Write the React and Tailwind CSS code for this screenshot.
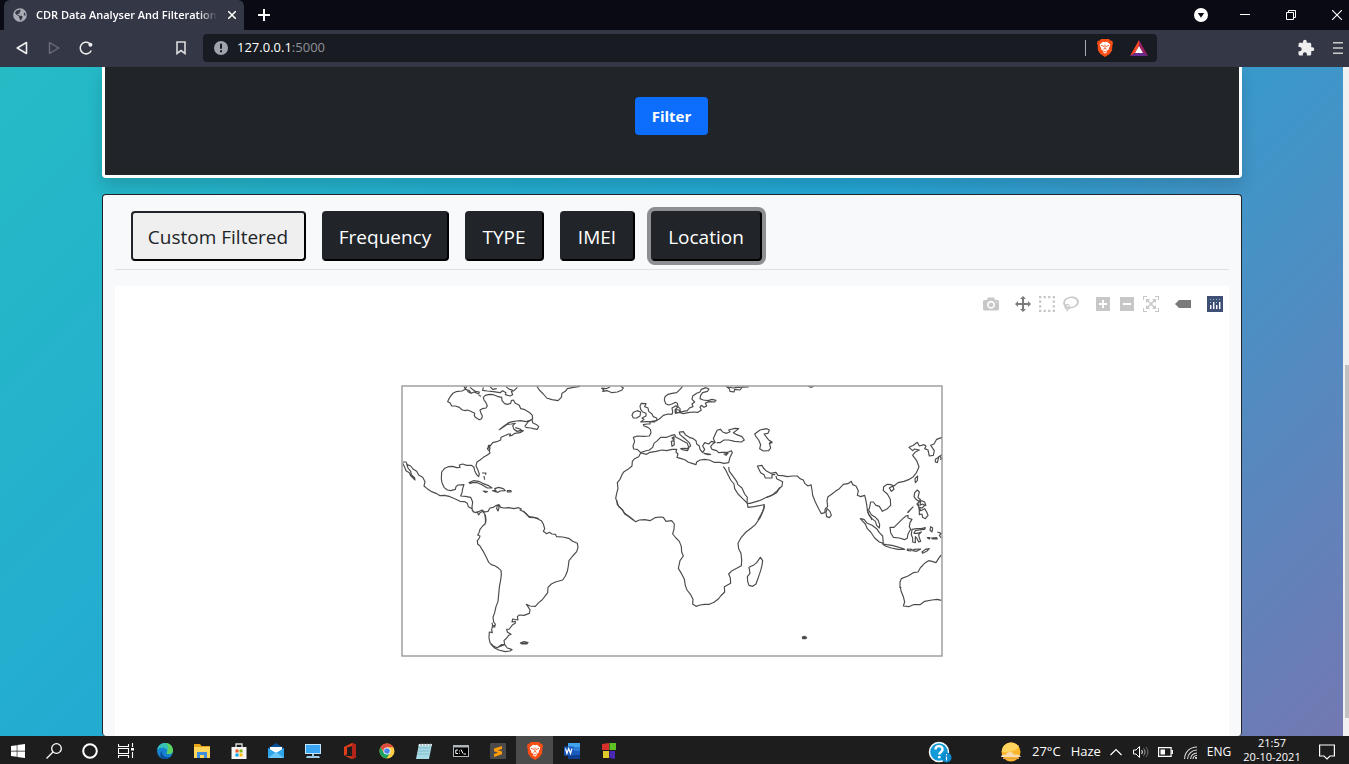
import React from "react";
import { FaWindows, FaGlobeAmericas } from "react-icons/fa";
import { MdExtension } from "react-icons/md";

const MODEBAR = {
  camera: {
    box: "0 0 1000 1000",
    d: "m500 450c-83 0-150-67-150-150 0-83 67-150 150-150 83 0 150 67 150 150 0 83-67 150-150 150z m400 150h-120c-16 0-34 13-39 29l-31 93c-6 15-23 28-40 28h-340c-16 0-34-13-39-28l-31-94c-6-15-23-28-40-28h-120c-55 0-100-45-100-100v-450c0-55 45-100 100-100h800c55 0 100 45 100 100v450c0 55-45 100-100 100z m-400-550c-138 0-250 112-250 250 0 138 112 250 250 250 138 0 250-112 250-250 0-138-112-250-250-250z m365 380c-19 0-35 16-35 35 0 19 16 35 35 35 19 0 35-16 35-35 0-19-16-35-35-35z",
  },
  pan: {
    box: "0 0 1000 1000",
    d: "m1000 350l-187 188 0-125-250 0 0 250 125 0-188 187-187-187 125 0 0-250-250 0 0 125-188-188 186-187 0 125 252 0 0-250-125 0 187-188 188 188-125 0 0 250 250 0 0-126 187 188z",
  },
  select: {
    box: "0 0 1000 1000",
    d: "m0 850l0-143 143 0 0 143-143 0z m286 0l0-143 143 0 0 143-143 0z m285 0l0-143 143 0 0 143-143 0z m286 0l0-143 143 0 0 143-143 0z m-857-286l0-143 143 0 0 143-143 0z m857 0l0-143 143 0 0 143-143 0z m-857-285l0-143 143 0 0 143-143 0z m857 0l0-143 143 0 0 143-143 0z m-857-286l0-143 143 0 0 143-143 0z m286 0l0-143 143 0 0 143-143 0z m285 0l0-143 143 0 0 143-143 0z m286 0l0-143 143 0 0 143-143 0z",
  },
  lasso: {
    box: "0 0 1031 1000",
    d: "m1018 538c-36 207-290 336-568 286-277-48-473-256-436-463 10-57 36-108 76-151-13-66 11-137 68-183 34-28 75-41 114-42l-55-70 0 0c-2-1-3-2-4-3-10-14-8-34 5-45 14-11 34-8 45 4 1 1 2 3 2 5l0 0 113 140c16 11 31 24 45 40 4 3 6 7 8 11 48-3 100 0 151 9 278 48 473 255 436 462z m-624-379c-80 14-149 48-197 96 42 42 109 47 156 9 33-26 47-66 41-105z m-187-74c-19 16-33 37-39 60 50-32 109-55 174-68-42-25-95-24-135 8z m360 75c-34-7-69-9-102-8 8 62-16 128-68 170-73 59-175 54-244-5-9 20-16 40-20 61-28 159 121 317 333 354s407-60 434-217c28-159-121-318-333-355z",
  },
  plus: {
    box: "-62 0 1000 1000",
    d: "m1 787l0-875 875 0 0 875-875 0z m687-500l-187 0 0-187-125 0 0 187-188 0 0 125 188 0 0 187 125 0 0-187 187 0 0-125z",
  },
  minus: {
    box: "-62 0 1000 1000",
    d: "m0 788l0-876 875 0 0 876-875 0z m688-500l-500 0 0 125 500 0 0-125z",
  },
  reset: {
    box: "0 0 1000 1000",
    d: "m250 850l-187 0-63 0 0-62 0-188 63 0 0 188 187 0 0 62z m688 0l-188 0 0-62 188 0 0-188 62 0 0 188 0 62-62 0z m-875-938l0 188-63 0 0-188 0-62 63 0 187 0 0 62-187 0z m875 188l0-188-188 0 0-62 188 0 62 0 0 62 0 188-62 0z m-125 188l-1 0-93-94-156 156 156 156 92-93 2 0 0 250-250 0 0-2 93-92-156-156-156 156 94 92 0 2-250 0 0-250 0 0 93 93 157-156-157-156-93 94 0 0 0-250 250 0 0 0-94 93 156 157 156-157-93-93 0 0 250 0 0 250z",
  },
  tooltip: {
    box: "0 0 1500 1000",
    d: "m375 725l0 0-375-375 375-374 0-1 1125 0 0 750-1125 0z",
  },
};

function ModeButton({ name, label, active }) {
  const icon = MODEBAR[name];
  return (
    <button type="button" aria-label={label} className="size-4">
      <svg viewBox={icon.box} className={active ? "size-4 fill-[#7b7b7b]" : "size-4 fill-[#c7c7c7]"}>
        <path transform="matrix(1 0 0 -1 0 850)" d={icon.d} />
      </svg>
    </button>
  );
}

function Modebar() {
  return (
    <div className="flex justify-end gap-4 pt-[10px] pr-[6px]">
      <ModeButton name="camera" label="Download plot as a png" />
      <div className="flex gap-2">
        <ModeButton name="pan" label="Pan" active />
        <ModeButton name="select" label="Box Select" />
        <ModeButton name="lasso" label="Lasso Select" />
      </div>
      <div className="flex gap-2">
        <ModeButton name="plus" label="Zoom in" />
        <ModeButton name="minus" label="Zoom out" />
        <ModeButton name="reset" label="Reset" />
      </div>
      <ModeButton name="tooltip" label="Toggle show closest data on hover" active />
      <a href="#plotly" aria-label="Produced with Plotly" className="size-4">
        <svg viewBox="0 0 16 16" className="size-4">
          <rect width="16" height="16" fill="#3f4f75" />
          <g fill="#80cfbe">
            <rect x="3" y="3" width="1" height="1" /><rect x="6" y="3" width="1" height="1" />
            <rect x="9" y="3" width="1" height="1" /><rect x="12" y="3" width="1" height="1" />
            <rect x="3" y="6" width="1" height="1" /><rect x="9" y="6" width="1" height="1" />
          </g>
          <g fill="#fff">
            <rect x="3" y="9" width="1.4" height="4" /><rect x="6" y="6" width="1.4" height="7" />
            <rect x="9" y="9" width="1.4" height="4" /><rect x="12" y="6" width="1.4" height="7" />
          </g>
        </svg>
      </a>
    </div>
  );
}

const COASTS = [
  {
    at: "translate(400 380) scale(.33333)",
    d: `M200 19 L196 28 L186 33 L168 35 L160 39 L152 48 L146 58 L143 65 L150 68 L155 78 L166 78 L178 82 L187 90 L196 92 L202 90 L212 94 L224 100 L223 107 L226 112 L238 119 L245 116 L247 108 L243 100 L240 90 L247 86 L258 84 L262 78 L258 68 L252 60 L250 52 L256 46 L268 43 L280 44 L292 49 L305 52 L306 62 L314 71 L322 73 L332 70 L334 62 L340 60 L346 70 L358 76 L362 86 L372 88 L382 94 L390 99 L397 106 L398 116 L388 122 L378 125 L362 122 L350 123 L338 125 L326 128 L312 138 L298 149 L309 142 L322 133 L334 132 L346 130 L338 137 L342 148 L352 154 L360 152 L370 152 L360 158 L345 160 L336 166 L328 168 L332 162 L326 162 L312 168 L303 172 L302 180 L290 185 L278 188 L272 196 L267 196 L264 202 L270 204 L268 213 L270 219 L262 225 L250 232 L240 240 L231 246 L228 257 L234 271 L238 282 L236 290 L230 284 L224 272 L222 262 L214 256 L200 256 L188 252 L178 255 L180 262 L170 263 L158 259 L145 260 L134 265 L125 276 L124 296 L126 308 L132 322 L142 330 L152 332 L166 328 L168 320 L174 315 L192 314 L188 326 L186 338 L182 348 L196 349 L212 352 L218 366 L216 380 L217 392 L226 398 L238 394 L246 390 L254 396 L264 394 L270 384 L280 382 L290 376 L297 374 L302 382 L312 384 L326 383 L342 386 L356 383 L364 387 L360 390 L372 395 L380 404 L388 410 L402 412 L416 416
        M292 376 L290 386 L294 393 L297 384 L295 374
        M8 246 L18 246 L22 254 L32 258 L40 268 L50 274 L56 285 L68 292 L75 305 L72 318 L84 328 L95 335 L108 340 L120 347 L134 346 L150 350 L166 357 L180 364 L194 365 L202 370 L205 380 L216 386 L220 396 L232 397 L236 405 L240 398 L248 394 L254 402 L256 414 L257 430
        M8 250 L14 262 L18 272 L28 278 L32 287 L45 300 L44 294 L34 284 L32 274 L24 264 L20 252
        M264 196 L270 200 L262 206 L266 212
        M374 140 L384 126 L396 118 L398 128 L410 134 L416 140 L412 148 L400 146 L392 144 L376 142
        M342 148 L350 154 L366 152 L360 147 L346 143
        M206 308 L220 302 L236 304 L248 310 L264 316 L276 324 L262 324 L246 314 L232 308 L218 308 L208 311
        M278 332 L288 332 L284 326 L296 322 L310 326 L316 332 L300 333 L294 337 L284 334 Z
        M250 333 L262 335 L256 337 Z M322 332 L333 332 L333 336 L322 336 Z
        M246 279 L258 279 L256 284 M252 288 L254 299
        M192 19 L196 28 L208 32 L214 40 L222 36 L236 42 L238 36 L226 34 L220 30 L210 22 M202 34 L212 40 M236 46 L243 49
        M250 22 L248 31 L262 33 L280 35 L300 38 L308 32 L318 38 L316 44 L330 48 L338 44 L334 34 L342 32 L352 22 M270 20 L278 28 L290 26 M318 20 L328 28 L338 30
        M411 19 L418 30 L430 42 L440 54 L456 59 L474 62 L484 52 L486 40 L496 34 L502 26 L520 22 L540 19`,
  },
  {
    at: "translate(400 500) scale(.33333)",
    d: `M256 44 L258 60 L255 72 L248 78 L240 88 L237 98 L233 105 L240 108 L237 116 L232 122 L233 132 L240 138 L246 148 L252 158 L260 174 L266 187 L274 194 L286 198 L296 205 L303 211 L304 224 L302 240 L298 262 L296 284 L294 304 L288 320 L284 338 L279 352 L281 366 L286 372 L284 381 L277 380 L275 390 L277 398 L268 396 L267 414 L270 428 L280 438 L292 443 L304 434 L314 434 L312 422 L320 414 L326 406 L333 403 L322 396 L320 388 L328 387 L338 374 L346 370 L346 364 L336 366 L338 357 L354 360 L352 350 L358 345 L372 346 L388 340 L390 330 L384 320 L379 313 L390 318 L406 319 L416 308 L426 300 L434 290 L443 278 L444 262 L454 252 L466 246 L488 240 L496 228 L502 214 L505 198 L507 182 L518 168 L530 155 L534 142 L532 130 L518 124 L506 115 L488 111 L470 110 L466 103 L456 102 L448 97 L440 101 L430 94 L434 86 L430 72 L424 62 L406 53 L388 52 L380 42 L368 33
        M272 432 L284 444 L296 450 L316 455 L330 453 L336 449 L322 444 L314 434 L304 438 L294 442
        M276 368 L278 378 L284 376
        M361 429 L372 425 L384 428 L380 432 L366 432 Z M366 430 L380 429`,
  },
  {
    at: "translate(600 380) scale(.33333)",
    d: `M248 19 L240 28 L230 38 L216 40 L204 43 L195 50 L193 60 L197 71 L206 75 L216 72 L226 67 L232 70 L234 80 L240 86 L241 96 L250 94 L262 92 L268 84 L279 80 L276 72 L284 66 L276 58 L278 48 L290 40 L300 36 L304 28 L318 23 L327 27 L322 34 L308 38 L302 46 L300 56 L310 60 L324 62 L336 58 L348 61 L344 66 L328 65 L316 69 L320 78 L312 82 L304 76 L300 82 L304 90 L294 97 L280 96 L264 98 L250 101 L238 97 L226 100 L225 90 L232 82 L228 77 L216 84 L218 96 L216 103 L204 102 L190 106 L178 117 L166 122 L164 126 L150 126 L150 132 L142 132 L130 134 L132 138 L144 142 L151 148 L153 158 L148 168 L130 169 L112 168 L100 172 L104 184 L99 198 L101 207 L112 208 L122 218 L136 213 L148 210 L158 202 L162 190 L172 182 L182 172 L200 172 L212 167 L224 164 L228 172 L240 178 L250 184 L262 190 L266 202 L262 206 L272 198 L268 188 L252 174 L240 164 L238 156 L250 155 L256 164 L268 172 L280 176 L288 182 L290 192 L298 198 L300 208 L308 218 L314 208 L308 198 L314 188 L326 192 L334 184 L346 187 L338 192 L332 200 L336 208 L350 212 L356 218 L366 217 L384 217 L394 212 L397 218 L390 232 L386 248 L372 250 L360 247 L342 247 L328 240 L314 238 L300 240 L290 246 L288 254 L276 250 L264 246 L256 240 L244 236 L231 232 L234 222 L228 216 L230 208 L216 208 L200 212 L186 210 L168 214 L150 217 L140 223 L122 219 L116 230 L104 236 L97 244 L96 258 L84 268 L72 275 L66 284 L60 298 L52 308 L54 325 L50 340 L47 355 L52 368 L56 380 L68 390 L74 402 L84 408 L100 420
        M242 206 L254 205 L266 206 L262 212 L250 210 Z M216 174 L222 170 L222 180 Z M214 184 L222 182 L223 194 L216 199 Z
        M312 220 L332 223 L324 224 Z M372 222 L384 220 L378 226 Z
        M345 186 L340 176 L346 162 L352 150 L362 148 L368 156 L380 160 L390 155 L386 150 L404 145 L416 146 L406 154 L400 158 L410 164 L426 170 L433 180 L424 186 L404 184 L386 180 L372 180 L360 188 L350 188
        M120 78 L124 70 L138 71 L134 80 L144 84 L146 94 L156 102 L160 110 L170 114 L171 122 L154 124 L138 125 L122 126 L132 118 L126 114 L138 108 L138 100 L128 96 L122 88 Z
        M96 106 L100 97 L112 92 L122 96 L120 108 L110 114 L100 114 Z
        M4 24 L12 30 L8 34 L22 32 L36 38 L52 36 L66 30 L70 24 L62 19 M4 24 L18 26 L30 21
        M378 19 L388 26 L390 34 L402 36 L404 28 L420 30 L428 20 M384 21 L400 24 L412 22 L446 21
        M226 88 L236 90 L242 98 L230 98 Z
        M464 162 L480 150 L500 146 L508 150 L504 160 L492 162 L500 172 L506 180 L516 186 L508 190 L512 204 L506 212 L490 213 L479 206 L482 194 L476 180 L468 170 Z
        M370 260 L376 268 L384 284 L392 300 L402 312 L404 326 L414 342 L428 356 L442 370 L444 382 L462 380 L493 374 L492 386 L484 402 L474 420
        M386 261 L388 274 L400 290 L410 304 L414 314 L426 324 L434 342 L442 352 L441 370 L450 370 L478 362 L500 352 L518 344 L532 332 L540 322`,
  },
  {
    at: "translate(600 500) scale(.33333)",
    d: `M50 0 L52 14 L66 28 L74 40 L90 52 L107 65 L118 60 L134 59 L150 62 L165 53 L180 51 L190 52 L198 64 L215 62 L223 72 L222 88 L218 102 L228 114 L238 124 L244 140 L245 156 L250 168 L240 182 L235 205 L244 220 L253 238 L256 256 L261 270 L272 284 L279 298 L278 312 L288 319 L300 315 L314 313 L328 313 L342 307 L354 298 L362 288 L374 276 L373 260 L384 254 L392 250 L391 234 L386 222 L396 212 L410 205 L424 197 L425 180 L423 160 L416 146 L414 130 L424 112 L438 96 L454 84 L466 74 L480 54 L488 36 L493 16
        M481 172 L488 182 L486 196 L482 212 L475 232 L468 252 L458 259 L447 256 L443 244 L442 230 L450 220 L447 202 L460 196 L470 188 Z
        M607 411 L614 409 L620 413 L616 416 L608 416 Z M608 413 L618 414`,
  },
  {
    at: "translate(750 380) scale(.33333)",
    d: `M76 284 L66 284 L66 294 L46 294 L42 284 L32 278 L26 266 L22 258 L36 256 L40 264 L48 272 L62 280 L78 277 L84 286 L98 287 L112 290 L128 288 L142 288 L150 296 L160 300 L164 310 L174 318 L183 314 L186 330 L188 346 L196 366 L206 386 L214 401 L224 398 L226 386 L233 380 L231 362 L234 350 L246 342 L256 334 L268 326 L280 313 L294 311 L304 304 L308 314 L318 318 L325 332 L322 346 L332 350 L344 346 L347 358 L350 374 L352 390 L356 402 L362 412 L366 420 M352 390 L358 386 L362 366 L370 366 L378 376 L388 379 L397 394 L412 386 L422 376 L421 358 L412 342 L400 332 L401 320 L412 313 L424 314 L432 318 L444 308 L462 304 L478 298 L490 290 L500 277 L507 260 L500 242 L488 226 L496 216 L508 210 L494 207 L488 212 L477 202 L490 196 L502 187 L508 198 L522 194 L528 198 L524 206 L534 210 L538 228 L550 226 L553 212 L542 196 L552 192 L560 178 L576 172
        M78 288 L80 296 L98 305 L96 318 L86 328 L80 338 L62 348 L50 352
        M60 184 L66 188 L58 190
        M231 386 L240 394 L244 406 L238 413 L230 410 L228 398 Z
        M418 324 L428 318 L432 328 L424 334 Z M495 296 L503 288 L502 302 L496 308 Z
        M556 238 L566 232 L562 248 L556 246 Z M564 232 L576 224 M570 238 L576 236 L570 230
        M175 19 L182 22 L190 19`,
  },
  {
    at: "translate(820 480) scale(.33333)",
    d: `M142 92 L146 104 L156 116 L166 124 L170 136 L178 144 L179 134 L174 120 L164 110 L154 104 L146 90
        M121 116 L132 118 L142 130 L156 136 L170 146 L178 158 L188 168 L190 190 L178 186 L164 174 L152 156 L142 146 L136 132 Z
        M188 192 L200 194 L216 196 L230 200 L244 204 L254 208 L234 208 L214 204 L196 198 Z
        M210 142 L222 142 L234 130 L246 118 L258 108 L264 106 L264 114 L276 118 L270 128 L268 140 L272 148 L264 162 L262 174 L254 179 L238 174 L220 172 L212 158 Z
        M276 148 L290 146 L304 146 L316 143 L314 148 L298 150 L286 152 L282 160 L292 160 L304 156 L296 164 L298 174 L302 184 L296 186 L290 174 L286 170 L286 188 L278 186 L278 174 L274 164 Z
        M332 140 L338 144 L336 156 L330 150 Z M322 173 L330 173 L328 177 Z M335 174 L350 173 L352 177 L338 177 Z
        M352 156 L364 160 L358 166 L364 174 M262 207 L276 208 L272 213 L262 211 Z M282 208 L302 207 L290 214 L278 212 Z M306 216 L316 208 L328 206 L320 214 L308 220 Z
        M284 38 L292 30 L298 36 L294 52 L302 60 L296 64 L288 58 L282 50 Z M262 98 L270 90 L280 80 M264 98 L272 88 M294 68 L302 64 L300 76 L308 72 L314 76 L306 84 L298 82 L302 92 L314 86 L320 96 L324 106 L316 116 L308 112 L306 102 L298 104 L298 92 Z M304 62 L314 66 L318 78 M290 70 L296 80
        M364 225 L358 232 L348 248 L336 244 L326 242 L316 248 L302 262 L294 276 L280 278 L264 288 L244 296 L240 306 L240 318 L243 332 L250 350 L254 366 L250 378 L266 380 L280 374 L300 374 L314 364 L336 360 L352 358 L364 361
        M302 262 L308 258 M238 322 L244 322`,
  },
];

function WorldMap() {
  return (
    <svg viewBox="0 0 542 272" role="img" aria-label="World map" className="mx-auto mt-[73px] block w-[542px] max-w-full">
      <g transform="translate(-401 -385)">
        <g fill="none" stroke="#4c4c4c" strokeWidth="3.5" strokeLinejoin="round">
          {COASTS.map((c) => (
            <path key={c.at} transform={c.at} d={c.d} />
          ))}
        </g>
        <rect x="402" y="386" width="540" height="270" fill="none" stroke="#999" strokeWidth="1.4" />
      </g>
    </svg>
  );
}

function BraveIcon() {
  return (
    <svg viewBox="0 0 16 18" className="h-[18px] w-4">
      <path d="M4 0h8l1.600 1.800 1.600-.1.800 2.800-.6 1.600L15 11.500 12.600 15 8 18 3.400 15 1 11.500.600 6.100 0 4.500.800 1.700l1.600.1z" fill="#fb4e14" />
      <path d="M8 3.200l2-.5 3.300 2.800-.6 2.300-1 1.200.3 1.200-2.400 1.700.3 1.300L8 14.800l-1.900-1.600.3-1.300L4 10.200l.3-1.200-1-1.200-.6-2.300L6 2.700z" fill="#fff" />
      <path d="M4 6.300l3 1.200M12 6.300L9 7.500M6.300 10.400 8 9.500l1.700.9M6.700 12.300l1.300.7 1.300-.7M8 5.500v4" stroke="#fb4e14" strokeWidth=".9" fill="none" />
    </svg>
  );
}

function BrowserChrome() {
  return (
    <header className="shrink-0">
      <div className="flex h-[30px] items-center bg-[#0a0a14] pl-1 text-white">
        <div className="flex h-full w-60 items-center rounded-t-md bg-[#343746] pr-1 pl-[9px]">
          <FaGlobeAmericas className="size-[14px] shrink-0 text-[#a9acb4]" />
          <span className="ml-[9px] shrink-0 mask-r-from-90% text-[11px] font-semibold whitespace-nowrap">
            CDR Data Analyser And Filteration
          </span>
          <button type="button" aria-label="Close tab" className="ml-auto flex size-4 shrink-0 items-center justify-center">
            <svg viewBox="0 0 8 8" className="size-2" stroke="#fff" strokeWidth="1.5"><path d="M0 0l8 8M8 0L0 8" /></svg>
          </button>
        </div>
        <button type="button" aria-label="New tab" className="ml-3 flex size-4 items-center justify-center">
          <svg viewBox="0 0 12 12" className="size-3" stroke="#fff" strokeWidth="2"><path d="M6 0v12M0 6h12" /></svg>
        </button>
        <div className="ml-auto flex h-full items-center">
          <button type="button" aria-label="Search tabs" className="mr-[25px] flex w-[18px] justify-center">
            <svg viewBox="0 0 14 14" className="size-[14px]"><circle cx="7" cy="7" r="7" fill="#fff" /><path d="M3.800 5h6.400L7 9.800z" fill="#0a0a14" /></svg>
          </button>
          <button type="button" aria-label="Minimize" className="flex w-[46px] justify-start pl-[5px]">
            <svg viewBox="0 0 10 10" className="size-[10px]" fill="#fff"><path d="M0 4h10v1H0z" /></svg>
          </button>
          <button type="button" aria-label="Restore" className="flex w-[46px] justify-start pl-[5px]">
            <svg viewBox="0 0 10 10" className="size-[10px]" fill="none" stroke="#fff"><path d="M.5 2.500h7v7h-7zM2.500 2V.5h7v7H8" /></svg>
          </button>
          <button type="button" aria-label="Close" className="flex w-[22px] justify-start pl-[5px]">
            <svg viewBox="0 0 10 10" className="size-[10px]" stroke="#fff" strokeWidth="1.100"><path d="M0 0l10 10M10 0L0 10" /></svg>
          </button>
        </div>
      </div>
      <div className="flex h-[37px] items-center bg-[#343746] pr-[6px] pb-px pl-4">
        <button type="button" aria-label="Back" className="w-8">
          <svg viewBox="0 0 12 14" className="h-[14px] w-3" fill="none" stroke="#eee" strokeWidth="1.600" strokeLinejoin="round"><path d="M10.500 1.500v11L1.200 7z" /></svg>
        </button>
        <button type="button" aria-label="Forward" className="w-[30px]">
          <svg viewBox="0 0 12 14" className="h-[14px] w-3" fill="none" stroke="#6c6e7a" strokeWidth="1.400" strokeLinejoin="round"><path d="M1.500 1.500v11L10.800 7z" /></svg>
        </button>
        <button type="button" aria-label="Reload" className="w-4">
          <svg viewBox="0 0 16 16" className="size-4"><path d="M13.300 10.500A5.800 5.800 0 1 1 11.500 3.400" fill="none" stroke="#eee" strokeWidth="1.500" /><circle cx="12.400" cy="4.800" r="2" fill="#eee" /></svg>
        </button>
        <button type="button" aria-label="Bookmark" className="ml-[81px] w-3">
          <svg viewBox="0 0 12 14" className="h-[14px] w-3" fill="none" stroke="#ddd" strokeWidth="1.600"><path d="M2 1h8v11.500L6 9.500l-4 3z" /></svg>
        </button>
        <div className="ml-4 flex h-7 flex-1 items-center rounded bg-[#191b22] pr-[9px] pl-[11px]">
          <svg viewBox="0 0 14 14" className="size-[14px]"><circle cx="7" cy="7" r="7" fill="#a0a3ab" /><path d="M6 2.800h2v5H6zM6 9.300h2v2H6z" fill="#191b22" /></svg>
          <a href="#address" className="ml-[9px] text-[13px] text-white">
            127.0.0.1<span className="text-[#8f9299]">:5000</span>
          </a>
          <span className="mr-[11px] ml-auto h-4 w-px bg-[#a9abb3]" />
          <button type="button" aria-label="Brave Shields" className="w-4"><BraveIcon /></button>
          <button type="button" aria-label="Brave Rewards" className="ml-[17px] w-[18px]">
            <svg viewBox="0 0 18 16" className="h-4 w-[18px]">
              <path d="M9 0L0 16l5-3 4-7z" fill="#ff4724" /><path d="M9 0l9 16-5-3-4-7z" fill="#9e1f63" /><path d="M0 16h18l-5-3H5z" fill="#662d91" /><path d="M9 6l4 7H5z" fill="#fff" />
            </svg>
          </button>
        </div>
        <button type="button" aria-label="Extensions" className="ml-[140px]"><MdExtension className="size-[18px] text-[#eee]" /></button>
        <button type="button" aria-label="Menu" className="ml-[18px]">
          <svg viewBox="0 0 10 12" className="h-3 w-[10px]" fill="#ccc"><path d="M0 0h10v1.500H0zM0 5.200h10v1.500H0zM0 10.500h10V12H0z" /></svg>
        </button>
      </div>
    </header>
  );
}

const TAB =
  "h-[50px] rounded border-2 border-t-[#212529] border-l-[#212529] border-r-black border-b-black pt-[2px] text-center text-[19px] whitespace-nowrap";

function Page() {
  return (
    <div className="flex min-h-0 flex-1">
      <main className="min-w-0 flex-1 overflow-hidden bg-[linear-gradient(135deg,#25bbc5_0%,#23a6d5_48%,#7378b2_100%)]">
        <div className="mx-auto max-w-[1140px]">
          <section className="flex justify-center rounded-b border-3 border-t-0 border-white bg-[#212529] pt-[30px] pb-10 shadow-[0_8px_16px_rgba(0,0,0,0.15)]">
            <button type="button" className="h-[38px] w-[73px] rounded bg-[#0d6efd] text-[15px] font-bold text-white">Filter</button>
          </section>
          <section className="mt-4 rounded border border-b-0 border-[#212529] bg-[#f8f9fa] px-3 pt-4">
            <nav className="mb-4 flex flex-wrap gap-4 border-b border-[#dee2e6] px-4 pb-2">
              <button type="button" className={`${TAB} w-[175px] bg-[#efefef] text-[#212529]`}>Custom Filtered</button>
              <button type="button" className={`${TAB} w-[127px] bg-[#212529] text-white`}>Frequency</button>
              <button type="button" className={`${TAB} w-[79px] bg-[#212529] text-white`}>TYPE</button>
              <button type="button" className={`${TAB} w-[75px] bg-[#212529] text-white`}>IMEI</button>
              <button type="button" className={`${TAB} w-[111px] bg-[#212529] text-white ring-4 ring-[#212529]/50`}>Location</button>
            </nav>
            <div className="bg-white pb-[79px]">
              <Modebar />
              <WorldMap />
            </div>
          </section>
        </div>
      </main>
      <div className="flex w-[6px] shrink-0 flex-col items-end bg-[#f1f1f1] pt-[298px] pb-[18px]" aria-hidden="true">
        <div className="w-1 flex-1 bg-[#c1c1c1]" />
      </div>
    </div>
  );
}

const APPS = [
  ["Edge", <><circle cx="8" cy="8" r="8" fill="#1683d0" /><path d="M.1 7A8 8 0 0 1 16 7c.2 3-2 4.200-4.500 4-2-.1-2-1.200-1.300-2.200C10.600 6 8 4.500 5.500 4.800 3 5 1 6 .1 7z" fill="#35c1b5" /><path d="M9 .1A8 8 0 0 1 16 7c.2 3-2 4.200-4.500 4-2-.1-2-1.200-1.300-2.200C12 6 11.500 3 9 .1z" fill="#5fd15c" /><path d="M5 9c0 4 4 6 8.500 4.800A8 8 0 0 1 5 15.400C2 13 3 8 7 7c-1 .3-2 1-2 2z" fill="#0b4f9e" /></>],
  ["File Explorer", <><path d="M0 1h6l1.500 2H16v12H0z" fill="#e8a317" /><path d="M0 4h16v11H0z" fill="#ffd65c" /><path d="M3 15V9h10v6h-3v-3H6v3z" fill="#3f8ddd" /></>],
  ["Store", <><path d="M5 5V1h6v4" fill="none" stroke="#ddd" strokeWidth="1.300" /><path d="M.5 4h15v12H.5z" fill="#f4f4f4" /><path d="M4.500 6.500h3v3h-3z" fill="#f25022" /><path d="M8.500 6.500h3v3h-3z" fill="#7fba00" /><path d="M4.500 10.500h3v3h-3z" fill="#00a4ef" /><path d="M8.500 10.500h3v3h-3z" fill="#ffb900" /></>],
  ["Mail", <><path d="M0 5l8-5 8 5v3H0z" fill="#0a4f94" /><path d="M2 4h12v6H2z" fill="#fff" /><path d="M0 5l8 5 8-5v10H0z" fill="#2fa4e8" /><path d="M0 15l8-6 8 6z" fill="#6bc6f7" /></>],
  ["This PC", <><path d="M0 1h16v10H0z" fill="#bfe4ff" /><path d="M1 2h14v8H1z" fill="#3aa5f3" /><path d="M7 11h2v2h5l1 2H1l1-2h5z" fill="#9ccbe8" /></>],
  ["Office", <><path d="M2 4l8-4 4 1.500v13L10 16l-8-3.500 8 1V3L5 4.500v7L2 12.500z" fill="#e03e1b" /><path d="M10 0l4 1.500v13L10 16z" fill="#b3241a" /></>],
  ["Chrome", <><circle cx="8" cy="8" r="7.500" fill="#ffce44" /><path d="M1.500 4.200A7.500 7.500 0 0 1 14.500 4.200H8L5 10z" fill="#dd4b3e" /><path d="M1.500 4.200A7.500 7.500 0 0 0 7.600 15.500L11 10H5z" fill="#1ba160" /><circle cx="8" cy="8" r="3.600" fill="#fff" /><circle cx="8" cy="8" r="2.800" fill="#4a86ea" /></>],
  ["Notepad", <><path d="M3 1h13l-3 15H0z" fill="#a8dbe5" /><path d="M3 1h13l-.5 2H2.500z" fill="#e9f4f6" /><path d="M3 5h11M2.500 8h11M2 11h11" stroke="#6eafc0" strokeWidth=".7" /><path d="M5 0v3M8 0v3M11 0v3M14 0v3" stroke="#5b7f88" strokeWidth=".8" /></>],
  ["Command Prompt", <><path d="M0 2h16v12H0z" fill="#aeb4ba" /><path d="M1 4.500h14V13H1z" fill="#000" /><path d="M5 7H2.800v3.500H5M6.500 7.500v1M6.500 9.800v.8M8 6.500l2 4M10.500 11h2.500" stroke="#fff" strokeWidth="1" fill="none" /></>],
  ["Sublime Text", <><rect width="16" height="16" rx="1" fill="#4a4a4a" /><path d="M4 5.500L12 3v3L8 7.300l4 1.200v2.700L4 14v-3l4-1.400-4-1.300z" fill="#ff9a0b" /></>],
  ["Brave", null],
  ["Word", <><path d="M4 0h12v4H4z" fill="#41a5ee" /><path d="M4 4h12v4H4z" fill="#2b7cd3" /><path d="M4 8h12v4H4z" fill="#185abd" /><path d="M4 12h12v4H4z" fill="#103f91" /><path d="M0 3.500h9.500v9H0z" fill="#185abd" /><path d="M1.500 5.500l1.400 5 1.800-5 1.800 5 1.400-5" stroke="#fff" strokeWidth="1.200" fill="none" /></>],
  ["Blocks", <><path d="M1 1l7-1v7H1z" fill="#d92f2a" /><path d="M8.500 0H15v7H8.500z" fill="#5fc224" /><path d="M2 8h6v7H2z" fill="#e2c92b" /><path d="M8.500 8H14v8l-5.500-1z" fill="#4a2ab5" /></>],
];

function Taskbar() {
  const cell = "flex h-7 items-center justify-center";
  return (
    <footer className="flex h-7 shrink-0 bg-[#1d1d1d] text-white">
      <button type="button" aria-label="Start" className={`${cell} w-9 pt-[2px]`}><FaWindows className="size-4" /></button>
      <button type="button" aria-label="Search" className={`${cell} w-9 pt-[2px]`}>
        <svg viewBox="0 0 16 16" className="size-4" fill="none" stroke="#fff" strokeWidth="1.300"><circle cx="10.500" cy="5.500" r="4.800" /><path d="M7 9L.5 15.500" /></svg>
      </button>
      <button type="button" aria-label="Cortana" className={`${cell} w-9 pt-[2px]`}>
        <svg viewBox="0 0 16 16" className="size-4" fill="none" stroke="#fff" strokeWidth="2"><circle cx="8" cy="8" r="6.800" /></svg>
      </button>
      <button type="button" aria-label="Task View" className={`${cell} mr-[2px] w-9 pt-[2px]`}>
        <svg viewBox="0 0 16 16" className="size-4" fill="none" stroke="#fff" strokeWidth="1.100"><path d="M.5 1v2.500h10V1M.5 15v-2.500h10V15M.5 5.500h10v5H.5zM14.500 0v4M14.500 9v6" /><path d="M13 5h3v2.500h-3z" fill="#fff" stroke="none" /></svg>
      </button>
      {APPS.map(([name, art]) => (
        <button key={name} type="button" aria-label={name} className={name === "Brave" ? `${cell} w-[37px] bg-[#4b4b4b] pt-[2px]` : `${cell} w-[37px] pt-[2px]`}>
          {art ? <svg viewBox="0 0 16 16" className="size-4">{art}</svg> : <BraveIcon />}
        </button>
      ))}
      <div className="ml-auto flex text-[13px]">
        <button type="button" aria-label="Help" className={`${cell} mr-12 w-6 pt-1`}>
          <svg viewBox="0 0 24 22" className="h-[22px] w-6">
            <circle cx="11" cy="11" r="9.500" fill="#109ad7" stroke="#fff" strokeWidth="1.500" />
            <path d="M7.500 8.500c0-4.500 7-4.500 7 0 0 2.500-3.200 2.500-3.200 5M11.300 15v2.300" fill="none" stroke="#fff" strokeWidth="2.400" />
            <circle cx="18.500" cy="16.500" r="5" fill="#0c8acb" /><path d="M18.500 13v1.200M18.500 15.500v4" stroke="#fff" strokeWidth="1.200" />
          </svg>
        </button>
        <button type="button" className="flex h-7 w-[104px] items-center gap-[10px] pt-1 whitespace-nowrap">
          <svg viewBox="0 0 22 20" className="h-5 w-[22px] shrink-0">
            <circle cx="11" cy="10" r="9.500" fill="#fdb52b" /><path d="M3 5a9.500 9.500 0 0 1 16 0c-4 5-12 6-17.400 4.500z" fill="#ffd560" />
            <path d="M1 15c0-3 4-3 5-2 1-4 7-4 8 0 3-1 6 0 7 2z" fill="#f5dcb4" /><path d="M3 16.500h16" stroke="#e2a24a" />
          </svg>
          <span>27°C</span>
          <span>Haze</span>
        </button>
        <button type="button" aria-label="Show hidden icons" className={`${cell} w-6 pt-1`}>
          <svg viewBox="0 0 12 8" className="h-2 w-3" fill="none" stroke="#fff" strokeWidth="1.200"><path d="M.5 7L6 1.500 11.500 7" /></svg>
        </button>
        <button type="button" aria-label="Volume" className={`${cell} w-[25px] pt-1`}>
          <svg viewBox="0 0 16 14" className="h-[14px] w-4" fill="none" stroke="#fff"><path d="M.5 5v4H3l3.500 3.500v-11L3 5zM8.500 5c1 1 1 3 0 4" /><path d="M10.500 3.500c2 2 2 5 0 7" stroke="#aaa" /><path d="M12.800 2c2.800 3 2.800 7 0 10" stroke="#777" /></svg>
        </button>
        <button type="button" aria-label="Battery" className={`${cell} w-[25px] pt-1`}>
          <svg viewBox="0 0 15 10" className="h-[10px] w-[15px]"><path d="M.6.6h12.500v8.800H.6z" fill="none" stroke="#fff" strokeWidth="1.200" /><path d="M2.500 2.500H7v5H2.500zM13.500 3H15v4h-1.500z" fill="#fff" /></svg>
        </button>
        <button type="button" aria-label="Wi-Fi" className={`${cell} w-[25px] pt-1`}>
          <svg viewBox="0 0 13 13" className="size-[13px]" fill="none" stroke="#ddd" strokeWidth="1.100"><path d="M.6 13C.6 6 6 1 13 1M3.600 13C3.600 8 8 4 13 4M6.600 13c0-3.500 3-6 6.400-6" /><path d="M9 13c0-2 2-3.500 4-3.500" /><circle cx="12" cy="12" r="1" fill="#fff" stroke="none" /></svg>
        </button>
        <button type="button" className={`${cell} w-8 pt-1 text-xs`}>ENG</button>
        <button type="button" className="ml-1 flex h-7 w-[66px] flex-col items-center justify-end text-[11px] leading-[14px]">
          <span>21:57</span>
          <span>20-10-2021</span>
        </button>
        <button type="button" aria-label="Notifications" className={`${cell} w-11 pt-1`}>
          <svg viewBox="0 0 16 16" className="size-4" fill="none" stroke="#fff" strokeWidth="1.200"><path d="M.6 1h14.800v11H11l-3 3-3-3H.6z" /></svg>
        </button>
      </div>
    </footer>
  );
}

export default function App() {
  return (
    <div className="flex h-screen flex-col overflow-hidden font-['Open_Sans','Noto_Sans',sans-serif]">
      <BrowserChrome />
      <Page />
      <Taskbar />
    </div>
  );
}
